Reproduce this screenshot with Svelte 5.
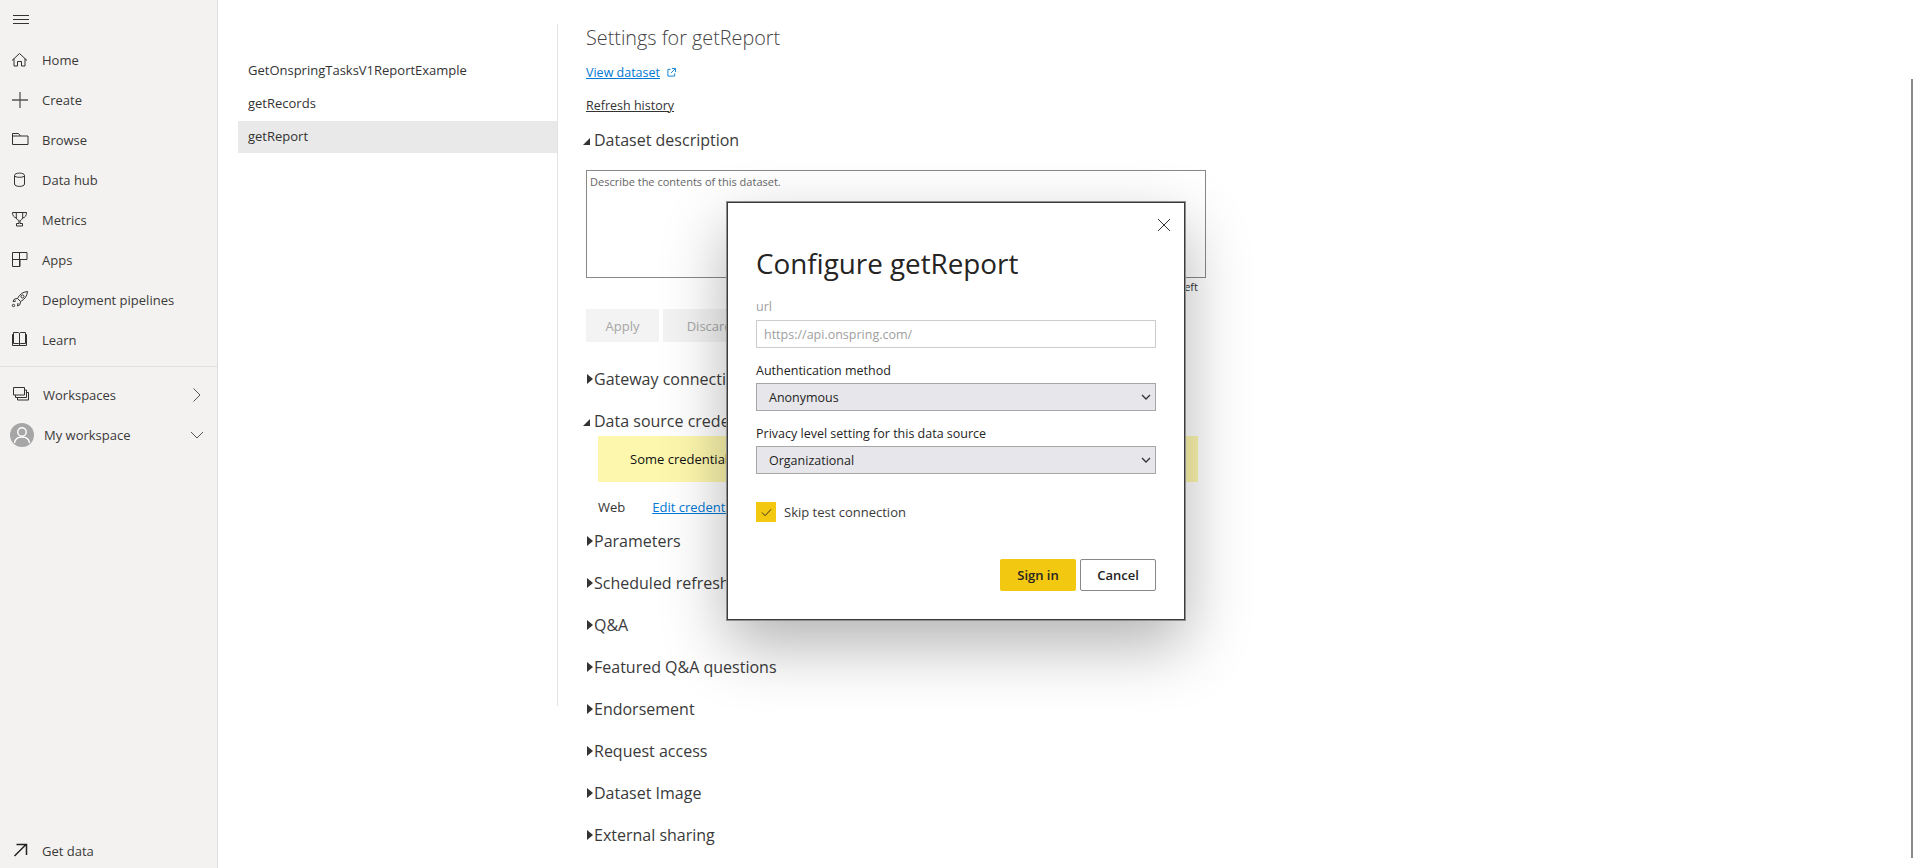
<script lang="ts">
    const navItems = [
        { label: 'Home', icon: 'home' },
        { label: 'Create', icon: 'plus' },
        { label: 'Browse', icon: 'folder' },
        { label: 'Data hub', icon: 'db' },
        { label: 'Metrics', icon: 'trophy' },
        { label: 'Apps', icon: 'apps' },
        { label: 'Deployment pipelines', icon: 'rocket' },
        { label: 'Learn', icon: 'book' }
    ];

    const datasets = ['GetOnspringTasksV1ReportExample', 'getRecords', 'getReport'];
    const selected = 'getReport';

    let skipTest = $state(true);
</script>

{#snippet navIcon(name: string)}
    <svg class="nav-icon" viewBox="0 0 20 20" fill="none" stroke="currentColor" stroke-width="1">
        {#if name === 'home'}
            <path d="M2 10.500 9.500 3.500 17 10.500M4 8.500v7.500h3.500v-4.500h4V16H15V8.500" />
        {:else if name === 'plus'}
            <path d="M10 2v16M2 10h16" stroke="#555" stroke-width="1.300" />
        {:else if name === 'folder'}
            <path d="M2.500 3.500h6l2 2.500h7.500v8.500h-15.500zM2.500 6h8" />
        {:else if name === 'db'}
            <path d="M4.500 5.500c0-3.200 10-3.200 10 0v8.500c0 3.200-10 3.200-10 0zM4.500 5.500c0 2.400 10 2.400 10 0" />
        {:else if name === 'trophy'}
            <path d="M2.500 2.500h14c0 3.200-1.400 5-3.800 5.500-.6 1.500-1.600 2.300-2.700 2.500v3h2.500v2.500H6.500v-2.500H9v-3c-1.100-.2-2.100-1-2.700-2.500-2.400-.5-3.800-2.300-3.800-5.500zM6.300 2.500V8M12.700 2.500V8" />
        {:else if name === 'apps'}
            <path d="M2.500 2.500h14.500v7h-7v7H2.500zM9.500 2.500v14M2.500 9.500h14.500" />
        {:else if name === 'rocket'}
            <path d="M17.500 1.500c-5 .5-8 3-10 7l3 3c4-2 6.500-5 7-10zM7.500 8.500l-3 .5-1.500 2.500 3-.5M10.500 11.500l-.5 3-2.500 1.500.5-3" />
            <circle cx="12.500" cy="6.500" r="1.500" />
            <circle cx="3.500" cy="15.500" r="1.200" />
        {:else if name === 'book'}
            <path d="M3.500 2.500h4.500c1 0 1.500.6 1.500 1.500v10.500c0-.6-.5-1-1.500-1H3.500zM15.500 2.500H11c-1 0-1.500.6-1.500 1.500v10.500c0-.6.500-1 1.500-1h4.500zM3.500 4.500h-1v11h14v-11h-1" />
        {/if}
    </svg>
{/snippet}

{#snippet section(label: string, open = false)}
    <h3 class="section-head">
        <span class={open ? 'tri-open' : 'tri-closed'}></span>
        <span>{label}</span>
    </h3>
{/snippet}

<div class="page">
    <nav class="nav">
        <button class="hamburger" aria-label="Collapse navigation">
            <svg viewBox="0 0 16 10" width="16" height="10" fill="none" stroke="#333" stroke-width="1">
                <path d="M0 .5h16M0 4.500h16M0 8.500h16" />
            </svg>
        </button>
        <ul class="nav-list">
            {#each navItems as item}
                <li class="nav-item">
                    {@render navIcon(item.icon)}
                    <span>{item.label}</span>
                </li>
            {/each}
        </ul>
        <hr class="nav-rule" />
        <div class="nav-item workspaces">
            <svg class="nav-icon" viewBox="0 0 20 20" fill="none" stroke="currentColor" stroke-width="1">
                <path d="M3.500 2.500h11v7.500h-11zM5.500 10v2.500h11V5h-2M7.500 12.500v2.500h11V7.500h-2" />
            </svg>
            <span class="grow">Workspaces</span>
            <svg class="chev" viewBox="0 0 10 14" width="10" height="14" fill="none" stroke="currentColor"><path d="M1.500 .5l6.500 6.500-6.500 6.500" /></svg>
        </div>
        <div class="nav-item mine">
            <span class="avatar">
                <svg viewBox="0 0 24 24" width="24" height="24" fill="none" stroke="#fff" stroke-width="1.400">
                    <circle cx="12" cy="9" r="4.200" />
                    <path d="M4.500 20c.5-4 3-6 7.500-6s7 2 7.500 6" />
                </svg>
            </span>
            <span class="grow">My workspace</span>
            <svg class="chev" viewBox="0 0 14 10" width="14" height="10" fill="none" stroke="currentColor"><path d="M1 2l6 6 6-6" /></svg>
        </div>
        <div class="nav-item get-data">
            <svg class="nav-icon" viewBox="0 0 20 20" fill="none" stroke="#222" stroke-width="1.500">
                <path d="M4.500 15 16 3.500M6.500 3.500H16.500V14" />
            </svg>
            <span>Get data</span>
        </div>
    </nav>

    <aside class="datasets">
        {#each datasets as name}
            <div class="dataset" class:selected={name === selected}>{name}</div>
        {/each}
    </aside>

    <main class="settings">
        <h1>Settings for getReport</h1>
        <p class="link-row">
            <a href="#top" class="link">View dataset</a>
            <svg viewBox="0 0 10 10" width="9" height="9" fill="none" stroke="#0078d4" stroke-width="1">
                <path d="M4 1.500H1v7.500h7.500V6M5.500.5h4v4M9 1 4.500 5.500" />
            </svg>
        </p>
        <p class="link-row second"><a href="#top" class="plain-link">Refresh history</a></p>

        {@render section('Dataset description', true)}
        <div class="description">Describe the contents of this dataset.</div>
        <div class="counter">1000 characters left</div>
        <div class="actions">
            <button class="ghost">Apply</button>
            <button class="ghost wide">Discard</button>
        </div>

        {@render section('Gateway connection')}
        {@render section('Data source credentials', true)}
        <div class="warning">Some credentials are invalid. Edit them to refresh this dataset.</div>
        <div class="cred-row">
            <span>Web</span>
            <a href="#top" class="link">Edit credentials</a>
        </div>
        {@render section('Parameters')}
        {@render section('Scheduled refresh')}
        {@render section('Q&A')}
        {@render section('Featured Q&A questions')}
        {@render section('Endorsement')}
        {@render section('Request access')}
        {@render section('Dataset Image')}
        {@render section('External sharing')}
    </main>

    <div class="scroll-thumb"></div>

    <div class="modal" role="dialog" aria-labelledby="modal-title">
        <button class="close" aria-label="Close">
            <svg viewBox="0 0 14 14" width="14" height="14" fill="none" stroke="#333" stroke-width="1">
                <path d="M1 1l12 12M13 1 1 13" />
            </svg>
        </button>
        <h2 id="modal-title">Configure getReport</h2>

        <label class="field-label muted" for="url">url</label>
        <input id="url" class="url" value="https://api.onspring.com/" disabled />

        <span class="field-label">Authentication method</span>
        <div class="select">
            <span>Anonymous</span>
            <svg viewBox="0 0 10 6" width="10" height="6" fill="none" stroke="#333" stroke-width="1.300"><path d="M1 1l4 4 4-4" /></svg>
        </div>

        <span class="field-label">Privacy level setting for this data source</span>
        <div class="select">
            <span>Organizational</span>
            <svg viewBox="0 0 10 6" width="10" height="6" fill="none" stroke="#333" stroke-width="1.300"><path d="M1 1l4 4 4-4" /></svg>
        </div>

        <button class="check-row" onclick={() => (skipTest = !skipTest)}>
            <span class="checkbox">
                {#if skipTest}
                    <svg viewBox="0 0 12 10" width="11" height="9" fill="none" stroke="#222" stroke-width="1"><path d="M1 5l3.500 3.500L11 1.500" /></svg>
                {/if}
            </span>
            Skip test connection
        </button>

        <div class="modal-actions">
            <button class="primary">Sign in</button>
            <button class="secondary">Cancel</button>
        </div>
    </div>
</div>

<style>
    :global(body) {
        margin: 0;
        background: #fff;
        overflow: hidden;
    }

    .page {
        position: relative;
        display: flex;
        width: 1914px;
        height: 868px;
        overflow: hidden;
        font-family: 'Open Sans', 'Noto Sans', sans-serif;
        font-size: 13px;
        color: #252423;
    }

    button {
        font-family: inherit;
    }

    /* left navigation */
    .nav {
        flex: 0 0 217px;
        display: flex;
        flex-direction: column;
        background: #f3f2f1;
        border-right: 1px solid #e1dfdd;
    }

    .hamburger {
        display: flex;
        align-items: center;
        height: 40px;
        padding: 0 0 0 13px;
        border: 0;
        background: none;
    }

    .nav-list {
        margin: 0;
        padding: 0;
        list-style: none;
    }

    .nav-item {
        display: flex;
        align-items: center;
        height: 40px;
        padding: 0 15px 0 10px;
        color: #3b3a39;
    }

    .nav-icon {
        flex: none;
        width: 20px;
        height: 20px;
        margin-right: 12px;
        color: #323130;
    }

    .nav-rule {
        width: 100%;
        margin: 6px 0 8px;
        border: 0;
        border-top: 1px solid #e1dfdd;
    }

    .workspaces .nav-icon {
        margin-right: 13px;
    }

    .mine {
        padding-right: 13px;
    }

    .grow {
        flex: 1;
    }

    .chev {
        flex: none;
        color: #555;
    }

    .avatar {
        flex: none;
        display: flex;
        align-items: center;
        justify-content: center;
        width: 24px;
        height: 24px;
        margin-right: 10px;
        border-radius: 50%;
        background: #a6a6a6;
    }

    .get-data {
        margin-top: auto;
        margin-bottom: -3px;
    }

    /* dataset list */
    .datasets {
        flex: 0 0 319px;
        height: 651px;
        margin: 24px 0 0 20px;
        padding-top: 31px;
        border-right: 1px solid #e3e3e3;
    }

    .dataset {
        height: 33px;
        padding-left: 10px;
        line-height: 30px;
        color: #333;
    }

    .dataset.selected {
        height: 32px;
        background: #e9e9e9;
    }

    /* settings column */
    .settings {
        flex: 1;
        padding: 24px 0 0 28px;
        color: #333;
    }

    h1 {
        margin: 0;
        font-size: 19.800px;
        font-weight: 300;
        line-height: 27px;
        color: #444;
    }

    .link-row {
        display: flex;
        align-items: center;
        gap: 7px;
        height: 20px;
        margin: 11px 0 0;
        font-size: 12.500px;
    }

    .link-row.second {
        margin: 13px 0 -5px;
    }

    .link {
        color: #0078d4;
        text-decoration: underline;
    }

    .plain-link {
        color: #333;
        text-decoration: underline;
    }

    .section-head {
        display: flex;
        align-items: center;
        height: 24px;
        margin: 18px 0 0;
        font-size: 16px;
        font-weight: 400;
        line-height: 24px;
        color: #3a3a3a;
    }

    .tri-open {
        flex: none;
        width: 0;
        height: 0;
        margin: 2px 4px 0 -3px;
        border-left: 7px solid transparent;
        border-bottom: 7px solid #333;
    }

    .tri-closed {
        flex: none;
        width: 0;
        height: 0;
        margin: 0 1px 0 1px;
        border-top: 5.500px solid transparent;
        border-bottom: 5.500px solid transparent;
        border-left: 6px solid #333;
    }

    .description {
        box-sizing: border-box;
        width: 620px;
        height: 108px;
        margin-top: 18px;
        padding: 3px;
        border: 1px solid #8a8886;
        font-size: 11px;
        color: #666;
    }

    .counter {
        width: 612px;
        height: 20px;
        font-size: 11px;
        line-height: 18px;
        text-align: right;
    }

    .actions {
        display: flex;
        gap: 4px;
        margin: 11px 0 25px;
    }

    .ghost {
        width: 73px;
        height: 33px;
        border: 0;
        background: #f3f3f3;
        font-size: 13px;
        color: #a6a6a6;
    }

    .ghost.wide {
        width: 93px;
    }

    .warning {
        width: 568px;
        height: 46px;
        margin: 3px 0 0 12px;
        padding-left: 32px;
        background: #fdf7ae;
        line-height: 46px;
        color: #111;
    }

    .cred-row {
        display: flex;
        gap: 27px;
        height: 20px;
        margin: 15px 0 -6px 12px;
        line-height: 20px;
    }

    .scroll-thumb {
        position: absolute;
        top: 79px;
        right: 1px;
        bottom: 10px;
        width: 2px;
        background: #8a8a8a;
    }

    /* modal */
    .modal {
        position: absolute;
        top: 202px;
        left: 727px;
        box-sizing: border-box;
        width: 458px;
        height: 418px;
        padding: 0 28px;
        border: 1px solid #3a3a3a;
        outline: 1px solid #8f8f8f;
        background: #fff;
        box-shadow: 0 25px 60px rgba(0, 0, 0, 0.3);
    }

    .close {
        position: absolute;
        top: 15px;
        right: 13px;
        display: flex;
        padding: 0;
        border: 0;
        background: none;
    }

    h2 {
        margin: 41px 0 0;
        font-size: 27.800px;
        font-weight: 400;
        line-height: 38px;
        color: #252423;
    }

    .field-label {
        display: block;
        height: 17px;
        margin-top: 14px;
        font-size: 12.500px;
        line-height: 18px;
    }

    .field-label.muted {
        height: 18px;
        margin-top: 16px;
        color: #a0a0a0;
    }

    .url {
        display: block;
        box-sizing: border-box;
        width: 400px;
        height: 28px;
        margin-top: 4px;
        padding: 0 7px;
        border: 1px solid #ccc;
        background: #fff;
        font: inherit;
        font-size: 12.500px;
        color: #a0a0a0;
    }

    .select {
        display: flex;
        align-items: center;
        justify-content: space-between;
        box-sizing: border-box;
        width: 400px;
        height: 28px;
        margin-top: 4px;
        padding: 0 4px 0 12px;
        border: 1px solid #a6a6a6;
        background: #e6e6eb;
        font-size: 12.500px;
    }

    .check-row {
        display: flex;
        align-items: center;
        gap: 8px;
        margin-top: 28px;
        padding: 0;
        border: 0;
        background: none;
        font-size: 13px;
        color: #3b3a39;
    }

    .checkbox {
        display: flex;
        align-items: center;
        justify-content: center;
        width: 20px;
        height: 20px;
        background: #f2c811;
    }

    .modal-actions {
        display: flex;
        justify-content: flex-end;
        gap: 4px;
        margin-top: 37px;
    }

    .primary,
    .secondary {
        box-sizing: border-box;
        width: 76px;
        height: 32px;
        border-radius: 2px;
        font-size: 13px;
        font-weight: 600;
    }

    .primary {
        border: 0;
        background: #f2c811;
        color: #252423;
    }

    .secondary {
        border: 1px solid #8a8886;
        background: #fff;
        color: #252423;
    }
</style>
